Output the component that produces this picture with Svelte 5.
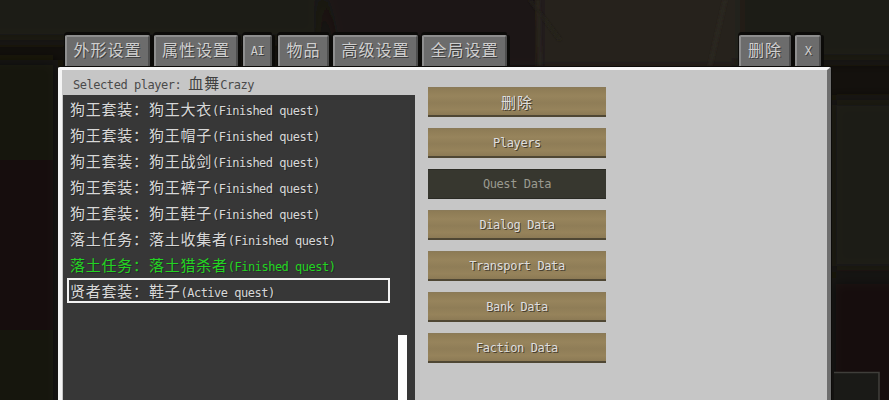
<script>
  const leftTabs = [
    { label: '外形设置', w: 85, gap: 4 },
    { label: '属性设置', w: 84, gap: 5 },
    { label: 'AI', w: 29, gap: 6, latin: true },
    { label: '物品', w: 51, gap: 4 },
    { label: '高级设置', w: 85, gap: 4 },
    { label: '全局设置', w: 85, gap: 0 }
  ];
  const rightTabs = [
    { label: '删除', w: 52, gap: 4 },
    { label: 'X', w: 26, gap: 0, latin: true }
  ];
  const quests = [
    { zh: '狗王套装：狗王大衣', en: '(Finished quest)' },
    { zh: '狗王套装：狗王帽子', en: '(Finished quest)' },
    { zh: '狗王套装：狗王战剑', en: '(Finished quest)' },
    { zh: '狗王套装：狗王裤子', en: '(Finished quest)' },
    { zh: '狗王套装：狗王鞋子', en: '(Finished quest)' },
    { zh: '落土任务：落土收集者', en: '(Finished quest)' },
    { zh: '落土任务：落土猎杀者', en: '(Finished quest)', hover: true },
    { zh: '贤者套装：鞋子', en: '(Active quest)', selected: true }
  ];
  const buttons = [
    { label: '删除', zh: true },
    { label: 'Players' },
    { label: 'Quest Data', disabled: true },
    { label: 'Dialog Data' },
    { label: 'Transport Data' },
    { label: 'Bank Data' },
    { label: 'Faction Data' }
  ];
</script>

<div class="stage">
  <svg class="backdrop" width="889" height="400" aria-hidden="true">
    <defs>
      <filter id="soft" x="-20%" y="-20%" width="140%" height="140%"><feGaussianBlur stdDeviation="7" /></filter>
      <filter id="softer" x="-20%" y="-20%" width="140%" height="140%"><feGaussianBlur stdDeviation="1.5" /></filter>
    </defs>
    <rect width="889" height="400" fill="#14110d" />
    <g filter="url(#soft)">
      <rect x="-20" y="-20" width="340" height="60" fill="#1e1b15" />
      <polygon points="320,-20 540,-20 580,70 340,70" fill="#1a1712" />
      <rect x="540" y="-20" width="200" height="90" fill="#26241b" />
      <rect x="740" y="-20" width="170" height="80" fill="#1e1b15" />
      <rect x="831" y="100" width="70" height="170" fill="#1c1b15" />
      <rect x="831" y="280" width="70" height="130" fill="#14100d" />
      <rect x="-20" y="60" width="78" height="100" fill="#151410" />
      <rect x="-20" y="160" width="78" height="170" fill="#120f0c" />
      <rect x="-20" y="330" width="78" height="90" fill="#14140f" />
    </g>
    <g filter="url(#softer)" stroke="#2e2c22" stroke-width="2">
      <line x1="538" y1="0" x2="540" y2="66" />
      <line x1="725" y1="0" x2="710" y2="66" />
      <line x1="530" y1="0" x2="560" y2="40" stroke="#24211a" />
    </g>
    <rect x="834" y="373" width="45" height="30" fill="#1a1a17" />
    <path d="M834 372.5H879V400" fill="none" stroke="#3f3e3a" stroke-width="1.6" />
  </svg>

  <div class="tabs">
    <div class="tabgroup">
      {#each leftTabs as t}
        <div class="tab" class:latin={t.latin} style="width:{t.w}px;margin-right:{t.gap}px">{t.label}</div>
      {/each}
    </div>
    <div class="tabgroup">
      {#each rightTabs as t}
        <div class="tab" class:latin={t.latin} style="width:{t.w}px;margin-right:{t.gap}px">{t.label}</div>
      {/each}
    </div>
  </div>

  <div class="panel">
    <div class="left">
      <div class="selected">Selected player: <span class="zh">血舞</span>Crazy</div>
      <div class="list">
        {#each quests as q}
          <div class="row" class:hover={q.hover} class:sel={q.selected}>
            <span class="zh">{q.zh}</span><span class="en">{q.en}</span>
          </div>
        {/each}
        <div class="scrollbar"></div>
      </div>
    </div>
    <div class="buttons">
      {#each buttons as b}
        <div class="btn" class:disabled={b.disabled} class:bzh={b.zh}>{b.label}</div>
      {/each}
    </div>
  </div>
</div>

<style>
  :global(body) {
    margin: 0;
    background: #14110d;
  }
  .stage {
    position: relative;
    width: 889px;
    height: 400px;
    overflow: hidden;
    padding-top: 35px;
    box-sizing: border-box;
    font-family: "DejaVu Sans Mono", "Noto Sans CJK SC", monospace;
  }
  .backdrop {
    position: absolute;
    inset: 0;
  }
  .tabs {
    position: relative;
    display: flex;
    justify-content: space-between;
    height: 32px;
    margin-left: 65px;
    width: 756px;
  }
  .tabgroup {
    display: flex;
  }
  .tab {
    box-sizing: border-box;
    height: 32px;
    background: #6c6c6c;
    border-top: 2px solid #8d8d8d;
    border-left: 2px solid #8f8f8f;
    border-right: 2px solid #4e4e4e;
    box-shadow: 0 -3px 0 #0c0b09, 3px 0 0 #0c0b09, -1px -2px 0 #0c0b09;
    border-radius: 2px 2px 0 0;
    color: #cfcfcf;
    font-family: "Noto Sans CJK SC", sans-serif;
    font-size: 16px;
    letter-spacing: 1px;
    line-height: 25px;
    text-align: center;
    text-shadow: 1px 1px 0 #3f3f3f;
    white-space: nowrap;
  }
  .tab.latin {
    font-family: "DejaVu Sans Mono", monospace;
    font-size: 12px;
    letter-spacing: -0.5px;
    line-height: 28px;
  }
  .panel {
    position: relative;
    display: flex;
    box-sizing: border-box;
    margin-left: 58px;
    width: 773px;
    height: 340px;
    background: #c6c6c6;
    border-top: 3px solid #f8f8f8;
    border-left: 4px solid #f4f4f4;
    border-right: 4px solid #6e6e6e;
    border-radius: 2px 2px 0 0;
    box-shadow: 0 -1px 0 #0c0b09, 1px -1px 0 #0c0b09;
  }
  .left {
    width: 352px;
    margin-left: 1px;
    flex: none;
  }
  .selected {
    height: 25px;
    padding-left: 10px;
    padding-top: 3px;
    box-sizing: border-box;
    color: #4a4a4a;
    font-size: 12px;
    letter-spacing: -0.45px;
    line-height: 22px;
    white-space: nowrap;
  }
  .selected .zh {
    font-size: 15px;
    letter-spacing: 1px;
    color: #404040;
  }
  .list {
    position: relative;
    height: 320px;
    background: #373737;
    padding-top: 1px;
    box-sizing: border-box;
  }
  .row {
    box-sizing: border-box;
    height: 26px;
    padding-left: 7px;
    color: #d8d8d8;
    line-height: 26px;
    white-space: nowrap;
    width: 328px;
  }
  .row .zh {
    font-family: "Noto Sans CJK SC", sans-serif;
    font-size: 15px;
    letter-spacing: 0.78px;
    text-shadow: 1px 1px 0 #2a2a2a;
  }
  .row .en {
    font-size: 12px;
    letter-spacing: -0.5px;
    text-shadow: 1px 1px 0 #2a2a2a;
  }
  .row.hover {
    color: #22d422;
  }
  .row.sel {
    height: 25px;
    border: 2px solid #f2f2f2;
    margin-left: 4px;
    padding-left: 1px;
    line-height: 21px;
    width: 323px;
  }
  .scrollbar {
    position: absolute;
    left: 335px;
    top: 240px;
    bottom: 0;
    width: 9px;
    background: #fff;
  }
  .buttons {
    display: flex;
    flex-direction: column;
    gap: 11.3px;
    margin-left: 13px;
    margin-top: 17px;
  }
  .btn {
    box-sizing: border-box;
    width: 178px;
    height: 29.7px;
    background: linear-gradient(180deg, #8d7b55, #97845c 30%, #8f7d57 55%, #96835b 80%, #8c7a55);
    border-top: 1px solid #8a7a58;
    border-bottom: 2px solid #4f4734;
    color: #dedede;
    font-size: 12px;
    letter-spacing: -0.4px;
    line-height: 28px;
    text-align: center;
    text-shadow: 1px 1px 0 #4a4030;
  }
  .btn.bzh {
    font-family: "Noto Sans CJK SC", sans-serif;
    font-size: 15px;
    letter-spacing: 1px;
  }
  .btn.disabled {
    background: #37372f;
    border-top: 1px solid #2c2c26;
    border-bottom: 1px solid #2a2a24;
    color: #9a9a90;
    text-shadow: none;
  }
</style>
